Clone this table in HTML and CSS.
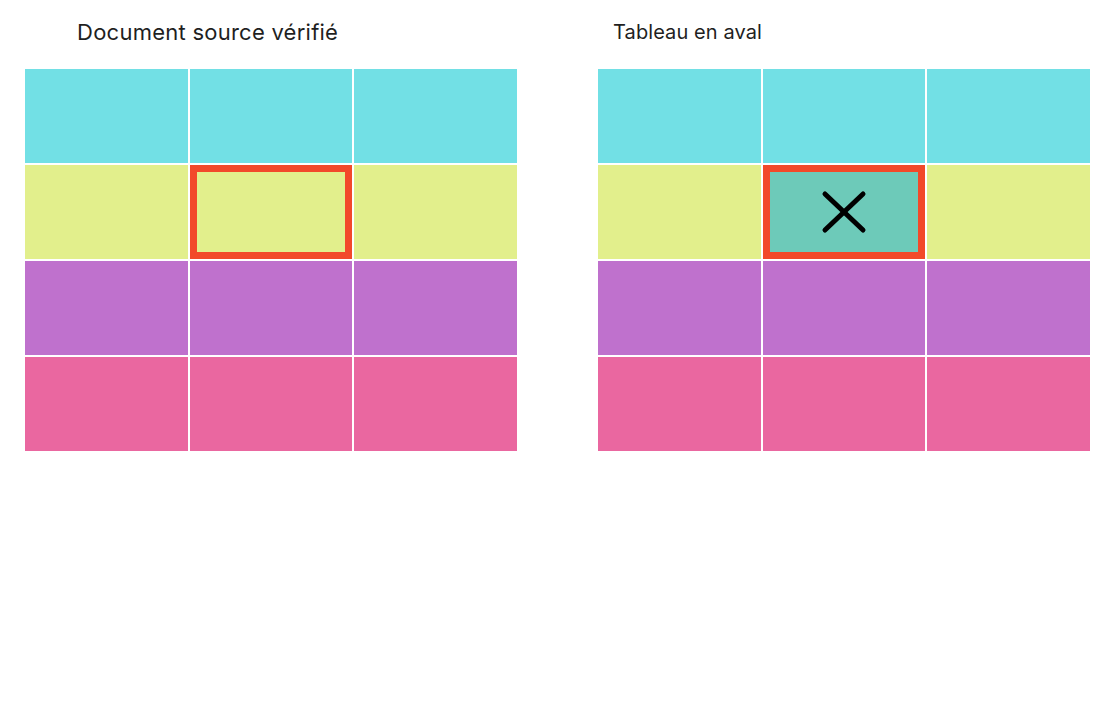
FILE: index.html
```html
<!DOCTYPE html>
<html lang="fr">
<head>
<meta charset="utf-8">
<title>Comparaison</title>
<link rel="stylesheet" href="styles.css">
</head>
<body>
<div class="page">
  <section class="panel">
    <h2 class="title title-left">Document source vérifié</h2>
    <div class="grid">
      <div class="cell cyan"></div><div class="cell cyan"></div><div class="cell cyan"></div>
      <div class="cell yellow"></div><div class="cell yellow marked"></div><div class="cell yellow"></div>
      <div class="cell purple"></div><div class="cell purple"></div><div class="cell purple"></div>
      <div class="cell pink"></div><div class="cell pink"></div><div class="cell pink"></div>
    </div>
  </section>
  <section class="panel">
    <h2 class="title title-right">Tableau en aval</h2>
    <div class="grid">
      <div class="cell cyan"></div><div class="cell cyan"></div><div class="cell cyan"></div>
      <div class="cell yellow"></div>
      <div class="cell teal marked">
        <svg class="x-icon" width="46" height="44" viewBox="0 0 46 44" aria-hidden="true">
          <line x1="4" y1="4" x2="42" y2="40"/>
          <line x1="42" y1="4" x2="4" y2="40"/>
        </svg>
      </div>
      <div class="cell yellow"></div>
      <div class="cell purple"></div><div class="cell purple"></div><div class="cell purple"></div>
      <div class="cell pink"></div><div class="cell pink"></div><div class="cell pink"></div>
    </div>
  </section>
</div>
</body>
</html>
```

FILE: styles.css
```css
html, body {
  margin: 0;
  padding: 0;
  background: #ffffff;
}

body {
  font-family: Inter, "Noto Sans", "Liberation Sans", sans-serif;
  color: #1f1f1f;
}

.page {
  display: flex;
  gap: 81px;
  padding-left: 25px;
}

.panel {
  width: 492px;
}

.title {
  margin: 0;
  font-weight: 400;
  height: 69px;
  box-sizing: border-box;
  padding-top: 19px;
  line-height: 26px;
}

.title-left {
  font-size: 22px;
  letter-spacing: 0.25px;
  padding-left: 52px;
}

.title-right {
  font-size: 20px;
  letter-spacing: 0.1px;
  padding-left: 15px;
}

.grid {
  display: grid;
  grid-template-columns: repeat(3, 1fr);
  grid-auto-rows: 94px;
  gap: 2px;
  background: #ffffff;
}

.cell {
  box-sizing: border-box;
}

.cyan { background: #72e0e5; }
.yellow { background: #e2ef8c; }
.purple { background: #bf71cd; }
.pink { background: #ea67a0; }
.teal { background: #6dcab9; }

.marked {
  border: 7px solid #f2492a;
  display: flex;
  align-items: center;
  justify-content: center;
}

.x-icon line {
  stroke: #000000;
  stroke-width: 5;
  stroke-linecap: round;
}
```
